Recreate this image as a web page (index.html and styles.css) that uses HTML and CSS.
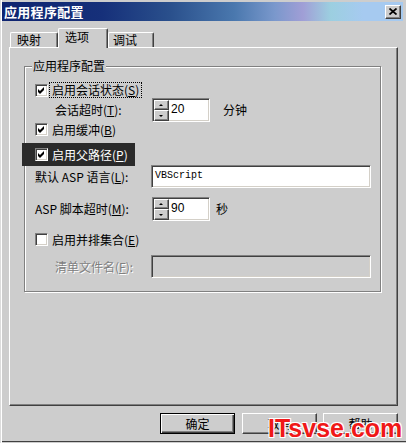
FILE: index.html
```html
<!DOCTYPE html>
<html lang="zh-CN">
<head>
<meta charset="utf-8">
<title>应用程序配置</title>
<link rel="stylesheet" href="styles.css">
</head>
<body>
<div class="window">
  <div class="titlebar">
    <span class="title">应用程序配置</span>
    <span class="close"><svg width="8" height="7" viewBox="0 0 8 7"><path d="M0.5 0.5 L7.5 6.5 M7.5 0.5 L0.5 6.5" stroke="#000" stroke-width="1.7" fill="none"/></svg></span>
  </div>
  <div class="main">
    <div class="tabs">
      <div class="tab t1">映射</div>
      <div class="tab t2 active">选项</div>
      <div class="tab t3">调试</div>
    </div>
    <div class="panel">
      <div class="group">
        <span class="legend">应用程序配置</span>
        <div class="row r1">
          <span class="cb"><svg width="9" height="9" viewBox="0 0 9 9"><polygon points="1,3 3,5 7,1 7,4 3,8 1,6" fill="#000"/></svg></span>
          <span class="cb-label focus">启用会话状态(<u>S</u>)</span>
        </div>
        <div class="row r2">
          <span class="lbl indent">会话超时(<u>T</u>):</span>
          <div class="spin">
            <div class="spin-btns"><span class="sb up"></span><span class="sb down"></span></div>
            <span class="spin-val">20</span>
          </div>
          <span class="unit u1">分钟</span>
        </div>
        <div class="row r3">
          <span class="cb"><svg width="9" height="9" viewBox="0 0 9 9"><polygon points="1,3 3,5 7,1 7,4 3,8 1,6" fill="#000"/></svg></span>
          <span class="cb-label">启用缓冲(<u>B</u>)</span>
        </div>
        <div class="row r4">
          <span class="cb"><svg width="9" height="9" viewBox="0 0 9 9"><polygon points="1,3 3,5 7,1 7,4 3,8 1,6" fill="#000"/></svg></span>
          <span class="cb-label">启用父路径(<u>P</u>)</span>
        </div>
        <div class="row r5">
          <span class="lbl wide">默认 ASP 语言(<u>L</u>):</span>
          <div class="textbox">VBScript</div>
        </div>
        <div class="row r6">
          <span class="lbl">ASP 脚本超时(<u>M</u>):</span>
          <div class="spin">
            <div class="spin-btns"><span class="sb up"></span><span class="sb down"></span></div>
            <span class="spin-val">90</span>
          </div>
          <span class="unit u2">秒</span>
        </div>
        <div class="row r7">
          <span class="cb"></span>
          <span class="cb-label">启用并排集合(<u>E</u>)</span>
        </div>
        <div class="row r8">
          <span class="lbl wide indent disabled">清单文件名(<u>F</u>):</span>
          <div class="textbox off"></div>
        </div>
      </div>
    </div>
    <div class="buttons">
      <div class="btn default">确定</div>
      <div class="btn cancel">取消</div>
      <div class="btn">帮助</div>
    </div>
  </div>
  <div class="watermark">ITsvse.com</div>
</div>
</body>
</html>
```

FILE: styles.css
```css
body {
  margin: 0;
  font-family: "Noto Sans CJK SC", "Liberation Sans", sans-serif;
  font-size: 12px;
  color: #000;
  background: #cdcdcd;
}

.window {
  position: relative;
  width: 406px;
  height: 443px;
  box-sizing: border-box;
  padding: 2px 3px 0 2px;
  background: #cdcdcd;
  box-shadow: inset 1px 0 #dcdcdc, inset 2px 0 #fff, inset 0 -1px #cdcdcd, inset 0 -2px #404040;
  overflow: hidden;
}

.titlebar {
  height: 19px;
  display: flex;
  align-items: center;
  justify-content: space-between;
  padding: 0 2px 0 2px;
  background: linear-gradient(90deg, #0e2470 0%, #16307a 25%, #2a508c 42%, #4a78ae 58%, #7a98cc 68%, #a09ed6 75%, #9ccfe0 82%, #a6caf0 90%, #a6caf0 100%);
}

.title {
  color: #fff;
  font-weight: bold;
  font-size: 13px;
  line-height: 19px;
  letter-spacing: 0.3px;
}

.close {
  width: 16px;
  height: 14px;
  box-sizing: border-box;
  background: #cdcdcd;
  border: 1px solid;
  border-color: #fff #404040 #404040 #fff;
  box-shadow: inset -1px -1px #808080;
  display: flex;
  align-items: center;
  justify-content: center;
}

.main {
  padding: 0 5px 0 7px;
}

.tabs {
  display: flex;
  align-items: flex-end;
  height: 19px;
  margin-top: 7px;
  padding-left: 1px;
  position: relative;
  z-index: 1;
}

.tab {
  height: 15px;
  box-sizing: border-box;
  border-top: 1px solid #fff;
  border-left: 1px solid #fff;
  border-right: 1px solid #404040;
  box-shadow: inset -1px 0 #808080;
  border-radius: 2px 2px 0 0;
  background: #cdcdcd;
  line-height: 14px;
  padding-left: 6px;
}

.t1 { width: 48px; }
.t2 { width: 50px; }
.t3 { width: 46px; padding-left: 4px; }

.tab.active {
  height: 20px;
  margin-bottom: -1px;
  line-height: 16px;
}

.panel {
  height: 359px;
  box-sizing: border-box;
  border-top: 1px solid #fff;
  border-left: 1px solid #fff;
  border-right: 1px solid #404040;
  border-bottom: 1px solid #404040;
  box-shadow: inset -1px -1px #808080;
  padding: 18px 0 0 14px;
}

.group {
  position: relative;
  width: 357px;
  height: 226px;
  box-sizing: border-box;
  border: 1px solid #808080;
  box-shadow: inset 1px 1px #fff, 1px 1px #fff;
  padding: 16px 0 0 10px;
}

.legend {
  position: absolute;
  top: -9px;
  left: 7px;
  padding: 0 1px;
  background: #cdcdcd;
  line-height: 16px;
}

.row {
  display: flex;
  align-items: center;
}

.cb {
  width: 13px;
  height: 13px;
  flex: none;
  box-sizing: border-box;
  background: #fff;
  border: 1px solid;
  border-color: #808080 #fff #fff #808080;
  box-shadow: inset 1px 1px #404040, inset -1px -1px #d4d0c8;
  padding: 1px;
  display: flex;
}

.cb-label {
  margin-left: 2px;
  padding: 0 2px;
  line-height: 14px;
  height: 14px;
}

.focus {
  outline: 1px dotted #000;
  outline-offset: 0;
}

.r1 { height: 14px; }
.r2 { height: 24px; margin-top: 1px; }
.r3 { height: 13px; margin-top: 1px; }

.r4 {
  height: 23px;
  margin-top: 7px;
  margin-left: -13px;
  width: 113px;
  padding-left: 13px;
  box-sizing: border-box;
  background: #2a2a2a;
  color: #fff;
}

.r5 { height: 23px; margin-top: -1px; }
.r6 { height: 24px; margin-top: 9px; }
.r7 { height: 13px; margin-top: 12px; }
.r8 { height: 23px; margin-top: 9px; }

.lbl {
  width: 117px;
  flex: none;
  box-sizing: border-box;
  line-height: 14px;
}

.lbl.wide { width: 116px; }
.indent { padding-left: 20px; }

.disabled {
  color: #808080;
  text-shadow: 1px 1px #fff;
}

.spin {
  width: 58px;
  height: 24px;
  flex: none;
  box-sizing: border-box;
  background: #fff;
  border: 1px solid;
  border-color: #808080 #fff #fff #808080;
  box-shadow: inset 1px 1px #404040, inset -1px -1px #d4d0c8;
  display: flex;
  align-items: flex-start;
  padding: 1px 0 0 1px;
}

.spin-btns {
  display: flex;
  flex-direction: column;
  width: 15px;
}

.sb {
  position: relative;
  height: 10px;
  box-sizing: border-box;
  background: #cdcdcd;
  border: 1px solid;
  border-color: #fff #404040 #404040 #fff;
  box-shadow: inset -1px -1px #808080;
}

.sb.down { height: 11px; }

.sb::after {
  content: "";
  position: absolute;
  left: 4px;
  top: 3px;
  border-left: 2px solid transparent;
  border-right: 2px solid transparent;
}

.sb.up::after { border-bottom: 2px solid #000; }
.sb.down::after { border-top: 2px solid #000; top: 4px; }

.spin-val {
  padding: 2px 0 0 2px;
  font-family: "Liberation Sans", sans-serif;
  font-size: 12px;
  line-height: 14px;
}

.unit { line-height: 14px; }
.u1 { margin-left: 13px; }
.u2 { margin-left: 6px; }

.textbox {
  width: 220px;
  height: 23px;
  flex: none;
  box-sizing: border-box;
  background: #fff;
  border: 1px solid;
  border-color: #808080 #fff #fff #808080;
  box-shadow: inset 1px 1px #404040, inset -1px -1px #d4d0c8;
  padding: 3px 0 0 3px;
  font-family: "Liberation Mono", monospace;
  font-size: 10px;
  line-height: 14px;
}

.textbox.off { background: #cdcdcd; }

.buttons {
  display: flex;
  justify-content: flex-end;
  margin-top: 7px;
}

.btn {
  width: 75px;
  height: 21px;
  box-sizing: border-box;
  background: #cdcdcd;
  border: 1px solid;
  border-color: #fff #404040 #404040 #fff;
  box-shadow: inset -1px -1px #808080;
  display: flex;
  align-items: center;
  justify-content: center;
  line-height: 14px;
}

.btn.default {
  border: 1px solid #000;
  box-shadow: inset 1px 1px #fff, inset -1px -1px #404040, inset -2px -2px #808080;
  margin-right: 7px;
}

.btn.cancel { margin-right: 6px; }

.watermark {
  position: absolute;
  left: 268px;
  top: 416px;
  font-family: "Liberation Sans", sans-serif;
  font-weight: bold;
  font-size: 25px;
  line-height: 25px;
  color: #f01818;
  text-shadow: 1px 1px #fff, -1px -1px #fff, 1px -1px #fff, -1px 1px #fff;
}
```
